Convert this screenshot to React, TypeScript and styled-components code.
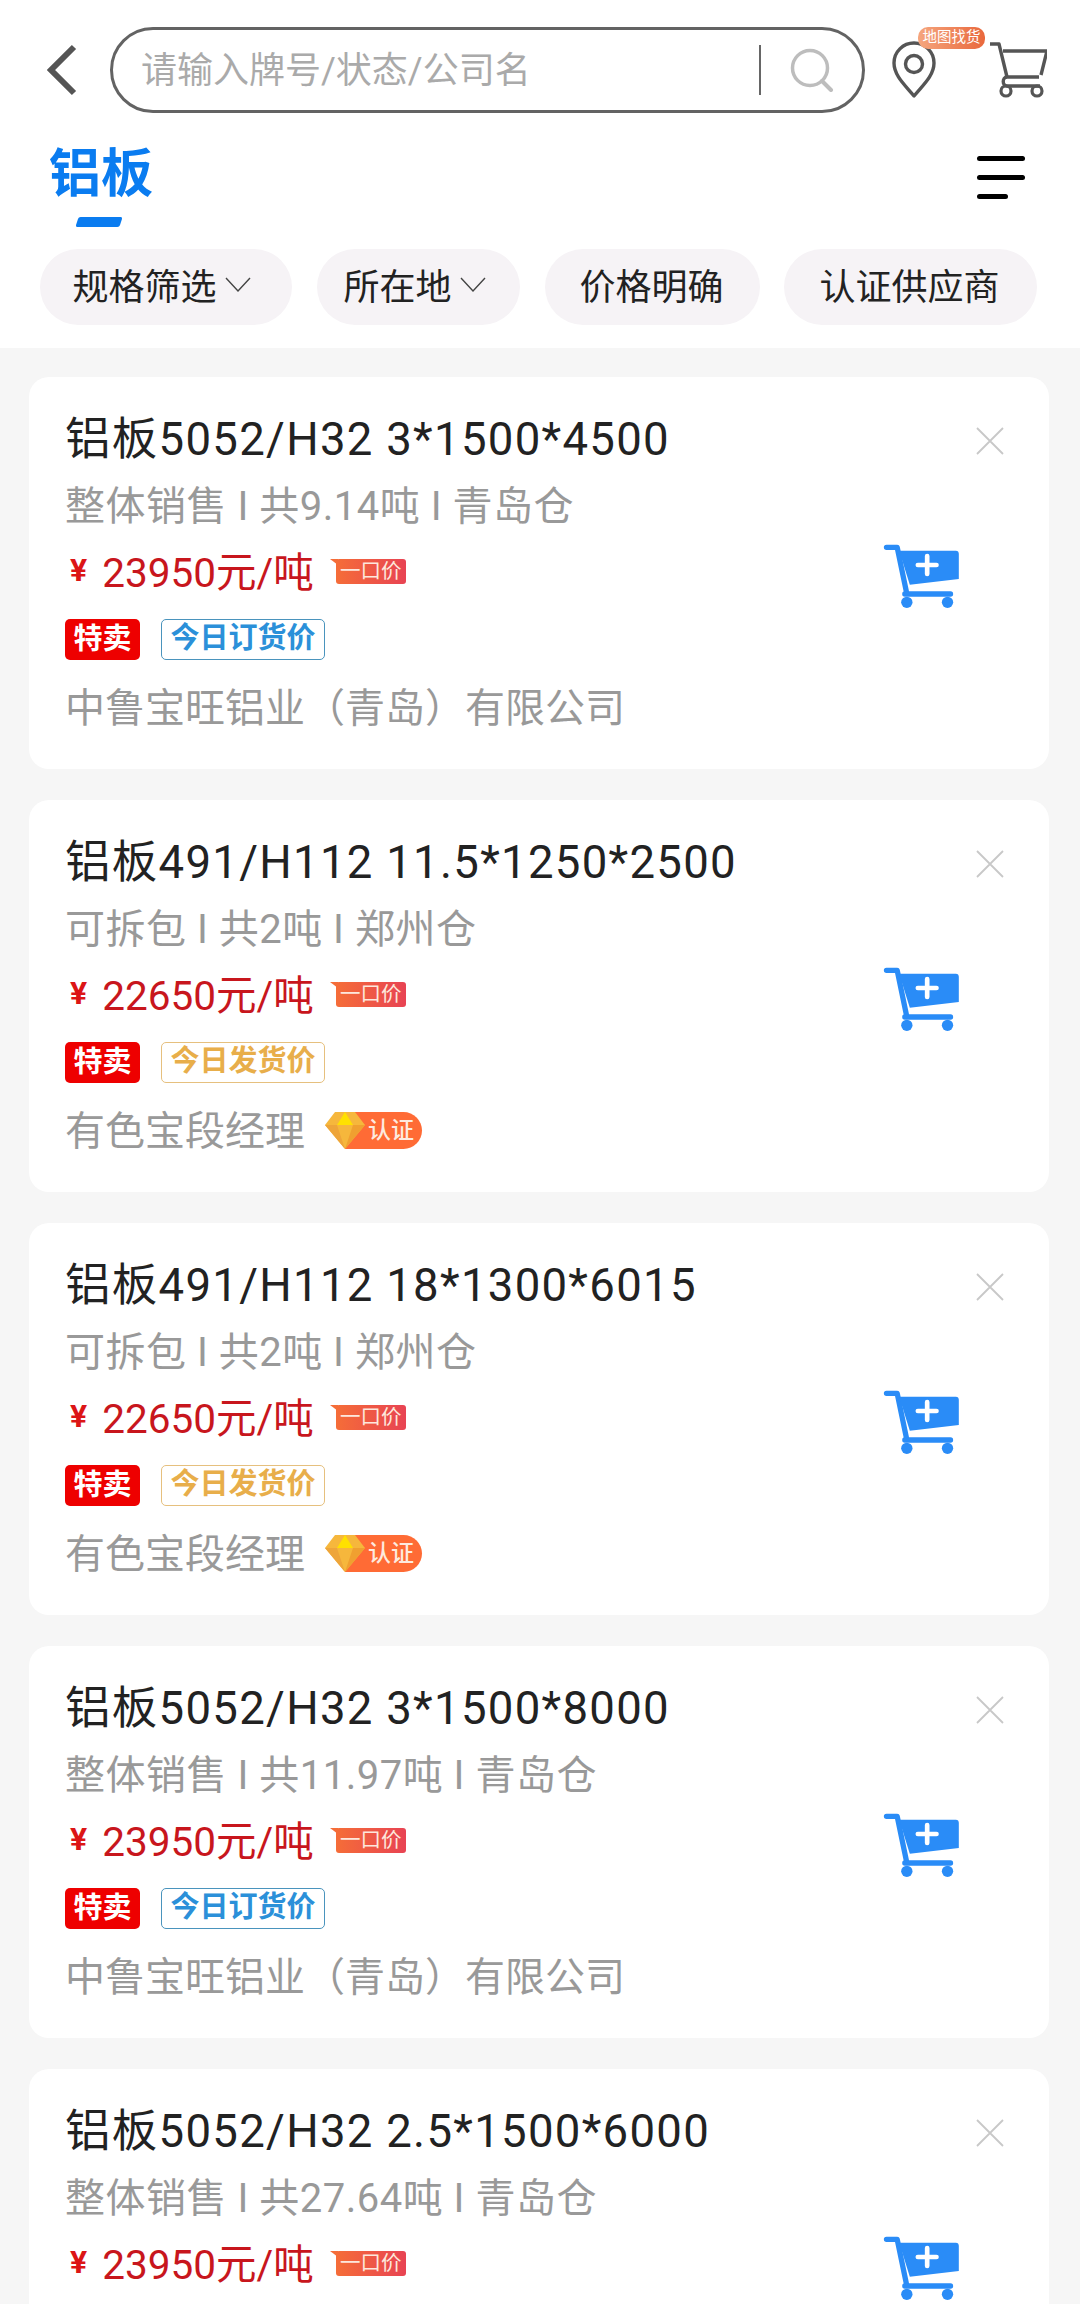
import React from "react";
import styled, { createGlobalStyle } from "styled-components";

const Global = createGlobalStyle`
  html, body { margin: 0; padding: 0; height: 2304px; overflow: hidden; background: #f6f6f6; }
  body { font-family: "Roboto", "Noto Sans CJK SC", sans-serif; }
  * { box-sizing: border-box; }
`;

const Page = styled.div`
  width: 1080px;
  height: 2304px;
  overflow: hidden;
  background: #f6f6f6;
`;
const Header = styled.header`
  height: 348px;
  background: #fff;
  display: flex;
  flex-direction: column;
`;
const TopBar = styled.div`
  display: flex;
  align-items: center;
  height: 86px;
  margin-top: 27px;
  padding-left: 47px;
`;
const BackIcon = styled.svg`
  width: 30px;
  height: 52px;
  margin-right: 33px;
  flex: none;
`;
const SearchBox = styled.div`
  width: 755px;
  height: 86px;
  flex: none;
  border: 3px solid #636363;
  border-radius: 43px;
  display: flex;
  align-items: center;
  padding-left: 28px;
`;
const Placeholder = styled.span`
  flex: 1;
  font-size: 36px;
  line-height: 44px;
  margin-top: 2px;
  color: #aaa;
  white-space: nowrap;
`;
const Divider = styled.i`
  width: 2px;
  height: 50px;
  background: #666;
  margin-right: 29px;
`;
const SearchIcon = styled.svg`
  width: 44px;
  height: 44px;
  margin-right: 28px;
`;
const PinWrap = styled.div`
  position: relative;
  width: 44px;
  height: 58px;
  margin-left: 27px;
  flex: none;
`;
const MapBadge = styled.span`
  position: absolute;
  left: 26px;
  top: -14px;
  width: 67px;
  height: 22px;
  border-radius: 10px;
  background: linear-gradient(90deg, #f5a67e, #e9683c);
  color: #fff;
  font-size: 14.5px;
  line-height: 22px;
  text-align: center;
  white-space: nowrap;
`;
const CartOutline = styled.svg`
  width: 58px;
  height: 56px;
  margin-left: 53px;
  flex: none;
`;
const TitleRow = styled.div`
  display: flex;
  justify-content: space-between;
  padding: 0 55px 0 49px;
  margin-top: 30px;
  height: 60px;
`;
const CategoryTab = styled.div`
  font-size: 52px;
  line-height: 64px;
  font-weight: 700;
  color: #0a7cf0;
  position: relative;
`;
const TabBar = styled.i`
  position: absolute;
  left: 28px;
  top: 74px;
  width: 44px;
  height: 10px;
  border-radius: 2px;
  background: #0a7cf0;
  transform: skewX(-18deg);
`;
const Hamburger = styled.div`
  width: 48px;
  padding-top: 13px;
  display: flex;
  flex-direction: column;
  gap: 14px;
`;
const HamLine = styled.i<{ $short?: boolean }>`
  display: block;
  height: 5px;
  width: ${(p) => (p.$short ? "31px" : "48px")};
  border-radius: 3px;
  background: #000;
`;
const Chips = styled.div`
  display: flex;
  padding-left: 40px;
  margin-top: 46px;
`;
const Chip = styled.div<{ $w: number; $mr: number; $pr?: number }>`
  width: ${(p) => p.$w}px;
  margin-right: ${(p) => p.$mr}px;
  height: 76px;
  border-radius: 38px;
  background: #f6f3f6;
  display: flex;
  align-items: center;
  justify-content: center;
  gap: 8px;
  padding-bottom: 6px;
  padding-right: ${(p) => p.$pr ?? 0}px;
  font-size: 36px;
  color: #222;
  white-space: nowrap;
`;
const ChipArrow = styled.svg`
  width: 26px;
  height: 15px;
  flex: none;
`;
const List = styled.main`
  padding: 29px 31px 0 29px;
  display: flex;
  flex-direction: column;
  gap: 31px;
`;
const Card = styled.article`
  height: 392px;
  flex: none;
  background: #fff;
  border-radius: 20px;
  display: flex;
  justify-content: space-between;
  padding: 30px 0 0 36px;
`;
const Info = styled.div`
  display: flex;
  flex-direction: column;
`;
const Title = styled.div`
  height: 67px;
  line-height: 66px;
  font-size: 45.5px;
  letter-spacing: 1.3px;
  color: #222;
  white-space: nowrap;
`;
const Sub = styled.div`
  height: 66px;
  line-height: 66px;
  font-size: 40px;
  letter-spacing: 0.5px;
  color: #999;
  white-space: nowrap;
`;
const PriceRow = styled.div`
  height: 59px;
  display: flex;
  align-items: center;
  padding-left: 5px;
`;
const Yen = styled.span`
  font-size: 32px;
  font-weight: 700;
  color: #dc1515;
  margin-right: 15px;
`;
const Price = styled.span`
  font-size: 40.5px;
  color: #c8161d;
  white-space: nowrap;
`;
const OneTag = styled.span`
  position: relative;
  margin-left: 22px;
  margin-top: 3px;
  width: 70px;
  height: 25px;
  border-radius: 3px;
  background: linear-gradient(90deg, #f56d38, #e84353);
  color: #fde7dc;
  font-size: 20.5px;
  line-height: 25px;
  text-align: center;
  &::before {
    content: "";
    position: absolute;
    left: -6px;
    top: 0;
    border-top: 6px solid #f56d38;
    border-left: 8px solid transparent;
  }
`;
const TagRow = styled.div`
  height: 80px;
  display: flex;
  align-items: center;
  gap: 21px;
`;
const SaleTag = styled.span`
  width: 75px;
  height: 41px;
  border-radius: 5px;
  background: #ee0000;
  color: #fff;
  font-size: 29px;
  font-weight: 700;
  line-height: 40px;
  text-align: center;
`;
const PriceTag = styled.span<{ $color: string; $border: string }>`
  width: 164px;
  height: 41px;
  border-radius: 5px;
  border: 1.5px solid ${(p) => p.$border};
  color: ${(p) => p.$color};
  font-size: 29px;
  font-weight: 700;
  line-height: 37px;
  text-align: center;
  white-space: nowrap;
`;
const Company = styled.div`
  height: 52px;
  display: flex;
  align-items: center;
  font-size: 40px;
  color: #999;
  white-space: nowrap;
`;
const CertBadge = styled.span`
  position: relative;
  display: block;
  margin-left: 20px;
  width: 97px;
  height: 37px;
  margin-top: 5px;
`;
const CertPill = styled.span`
  position: absolute;
  left: 20px;
  right: 0;
  top: 0;
  bottom: 0;
  border-radius: 0 19px 19px 0;
  background: #ff6b35;
  color: #fdeadf;
  font-size: 23px;
  font-weight: 500;
  line-height: 37px;
  text-align: right;
  padding-right: 8px;
`;
const Diamond = styled.svg`
  position: absolute;
  left: 0;
  top: 0;
  width: 40px;
  height: 37px;
`;
const Actions = styled.div`
  display: flex;
  flex-direction: column;
  align-items: flex-end;
  padding: 20px 45px 0 0;
`;
const CloseIcon = styled.svg`
  width: 28px;
  height: 28px;
`;
const AddCart = styled.svg`
  width: 77px;
  height: 65px;
  margin-top: 89px;
  margin-right: 44px;
`;

type Item = {
  title: string;
  sub: string;
  price: string;
  kind: "order" | "ship";
  company: string;
  cert?: boolean;
};

const items: Item[] = [
  { title: "铝板5052/H32 3*1500*4500", sub: "整体销售 I 共9.14吨 I 青岛仓", price: "23950元/吨", kind: "order", company: "中鲁宝旺铝业（青岛）有限公司" },
  { title: "铝板491/H112 11.5*1250*2500", sub: "可拆包 I 共2吨 I 郑州仓", price: "22650元/吨", kind: "ship", company: "有色宝段经理", cert: true },
  { title: "铝板491/H112 18*1300*6015", sub: "可拆包 I 共2吨 I 郑州仓", price: "22650元/吨", kind: "ship", company: "有色宝段经理", cert: true },
  { title: "铝板5052/H32 3*1500*8000", sub: "整体销售 I 共11.97吨 I 青岛仓", price: "23950元/吨", kind: "order", company: "中鲁宝旺铝业（青岛）有限公司" },
  { title: "铝板5052/H32 2.5*1500*6000", sub: "整体销售 I 共27.64吨 I 青岛仓", price: "23950元/吨", kind: "order", company: "中鲁宝旺铝业（青岛）有限公司" },
];

const Arrow = () => (
  <ChipArrow viewBox="0 0 26 15">
    <path d="M1 1l12 13L25 1" fill="none" stroke="#444" strokeWidth="1.4" />
  </ChipArrow>
);

export default function App() {
  return (
    <Page>
      <Global />
      <Header>
        <TopBar>
          <BackIcon viewBox="0 0 30 52">
            <path d="M27 3L4 26l23 23" fill="none" stroke="#555" strokeWidth="6" />
          </BackIcon>
          <SearchBox>
            <Placeholder>请输入牌号/状态/公司名</Placeholder>
            <Divider />
            <SearchIcon viewBox="0 0 44 44">
              <circle cx="20" cy="20" r="17.5" fill="none" stroke="#bdbdbd" strokeWidth="3.5" />
              <path d="M32 33l9 9" stroke="#bdbdbd" strokeWidth="4" strokeLinecap="round" />
            </SearchIcon>
          </SearchBox>
          <PinWrap>
            <svg width="44" height="58" viewBox="0 0 44 58">
              <path d="M22 55C14 45 2 35 2 22a20 20 0 0 1 40 0c0 13-12 23-20 33z" fill="none" stroke="#555" strokeWidth="3.4" strokeLinejoin="round" />
              <circle cx="22" cy="23" r="8.5" fill="none" stroke="#555" strokeWidth="3.4" />
            </svg>
            <MapBadge>地图找货</MapBadge>
          </PinWrap>
          <CartOutline viewBox="0 0 58 56">
            <path d="M1 2h9l8 33h32M14 9h44l-6 24" fill="none" stroke="#555" strokeWidth="3.4" strokeLinejoin="round" />
            <path d="M18 35c-5 0-5 9 0 9h33" fill="none" stroke="#555" strokeWidth="3.4" />
            <circle cx="17" cy="49" r="5" fill="none" stroke="#555" strokeWidth="3.2" />
            <circle cx="48" cy="49" r="5" fill="none" stroke="#555" strokeWidth="3.2" />
          </CartOutline>
        </TopBar>
        <TitleRow>
          <CategoryTab>
            铝板
            <TabBar />
          </CategoryTab>
          <Hamburger>
            <HamLine />
            <HamLine />
            <HamLine $short />
          </Hamburger>
        </TitleRow>
        <Chips>
          <Chip $w={252} $mr={25} $pr={9}>规格筛选<Arrow /></Chip>
          <Chip $w={203} $mr={25} $pr={8}>所在地<Arrow /></Chip>
          <Chip $w={215} $mr={24} $pr={2}>价格明确</Chip>
          <Chip $w={253} $mr={0} $pr={2}>认证供应商</Chip>
        </Chips>
      </Header>
      <List>
        {items.map((it, i) => (
          <Card key={i}>
            <Info>
              <Title>{it.title}</Title>
              <Sub>{it.sub}</Sub>
              <PriceRow>
                <Yen>¥</Yen>
                <Price>{it.price}</Price>
                <OneTag>一口价</OneTag>
              </PriceRow>
              <TagRow>
                <SaleTag>特卖</SaleTag>
                {it.kind === "order" ? (
                  <PriceTag $color="#2b90d9" $border="#4a94bd">今日订货价</PriceTag>
                ) : (
                  <PriceTag $color="#e8ae4a" $border="#e6c07e">今日发货价</PriceTag>
                )}
              </TagRow>
              <Company>
                {it.company}
                {it.cert && (
                  <CertBadge>
                    <CertPill>认证</CertPill>
                    <Diamond viewBox="0 0 40 37">
                      <path d="M10 0h20l10 13-20 24L0 13z" fill="#f6b73c" />
                      <path d="M12 13L20 0l8 13z" fill="#ffe100" />
                      <path d="M28 13h12L20 37z" fill="#f0a030" />
                      <path d="M0 13h12l8 24z" fill="#eea53a" />
                    </Diamond>
                  </CertBadge>
                )}
              </Company>
            </Info>
            <Actions>
              <CloseIcon viewBox="0 0 28 28">
                <path d="M1 1l26 26M27 1L1 27" stroke="#c8c8c8" strokeWidth="1.8" />
              </CloseIcon>
              <AddCart viewBox="250 430 230 195">
                <path d="M260 440h32l28 135" fill="none" stroke="#2a8cf7" strokeWidth="16" strokeLinecap="round" strokeLinejoin="round" />
                <path d="M298 450H468q9 0 9 10v75L330 552z" fill="#2a8cf7" />
                <path d="M315 580h137" stroke="#2a8cf7" strokeWidth="16" strokeLinecap="round" />
                <circle cx="321" cy="605" r="17" fill="#2a8cf7" />
                <circle cx="443" cy="605" r="17" fill="#2a8cf7" />
                <path d="M382 466v54M354 493h56" stroke="#fff" strokeWidth="14" strokeLinecap="round" />
              </AddCart>
            </Actions>
          </Card>
        ))}
      </List>
    </Page>
  );
}
